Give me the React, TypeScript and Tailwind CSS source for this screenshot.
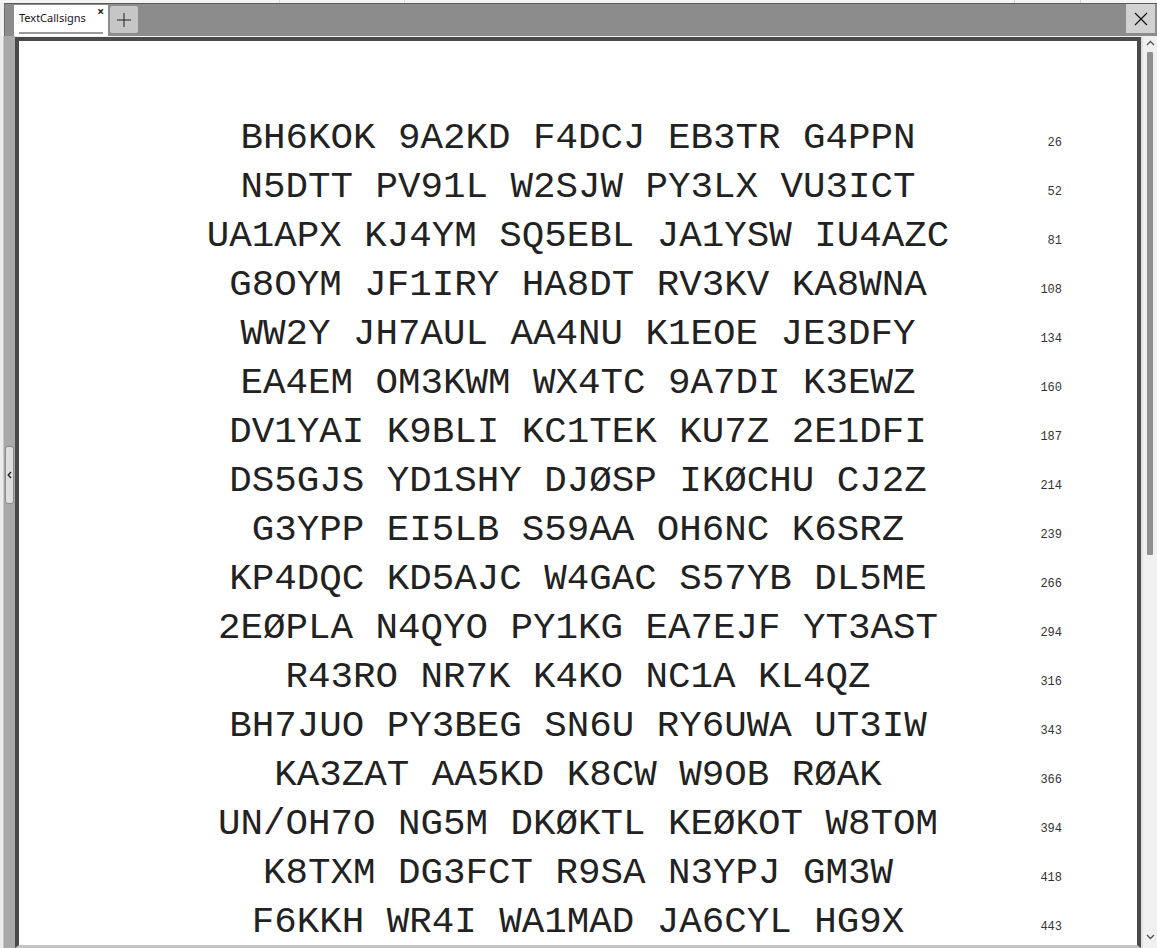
import React from "react";

const rows: [string, number][] = [
  ["BH6KOK 9A2KD F4DCJ EB3TR G4PPN", 26],
  ["N5DTT PV91L W2SJW PY3LX VU3ICT", 52],
  ["UA1APX KJ4YM SQ5EBL JA1YSW IU4AZC", 81],
  ["G8OYM JF1IRY HA8DT RV3KV KA8WNA", 108],
  ["WW2Y JH7AUL AA4NU K1EOE JE3DFY", 134],
  ["EA4EM OM3KWM WX4TC 9A7DI K3EWZ", 160],
  ["DV1YAI K9BLI KC1TEK KU7Z 2E1DFI", 187],
  ["DS5GJS YD1SHY DJØSP IKØCHU CJ2Z", 214],
  ["G3YPP EI5LB S59AA OH6NC K6SRZ", 239],
  ["KP4DQC KD5AJC W4GAC S57YB DL5ME", 266],
  ["2EØPLA N4QYO PY1KG EA7EJF YT3AST", 294],
  ["R43RO NR7K K4KO NC1A KL4QZ", 316],
  ["BH7JUO PY3BEG SN6U RY6UWA UT3IW", 343],
  ["KA3ZAT AA5KD K8CW W9OB RØAK", 366],
  ["UN/OH7O NG5M DKØKTL KEØKOT W8TOM", 394],
  ["K8TXM DG3FCT R9SA N3YPJ GM3W", 418],
  ["F6KKH WR4I WA1MAD JA6CYL HG9X", 443],
];

export default function App() {
  return (
    <div className="w-[1157px] h-[948px] overflow-hidden flex flex-col bg-[#f0f0f0] font-['Segoe_UI','Noto_Sans',sans-serif]">
      {/* top strip */}
      <div className="h-[3px] flex shrink-0 bg-[#f4f4f4]">
        <div className="w-[280px] border-r border-[#d8d8d8]" />
        <div className="w-[125px] border-r border-[#d8d8d8]" />
        <div className="w-[610px] border-r border-[#d0d0d0]" />
        <div className="w-[66px] border-r border-[#d0d0d0]" />
      </div>
      {/* tab bar */}
      <div className="h-[33px] shrink-0 flex items-start bg-[#8c8c8c] border-t border-[#5a5a5a] pl-[9px] pr-[2px] ml-[4px] border-l border-l-[#6a6a6a]">
        <div className="relative mt-[1px] w-[94px] h-[31px] bg-white">
          <span className="absolute left-[5px] top-[6px] text-[11px] leading-[14px] text-[#1c1222]">TextCallsigns</span>
          <span className="absolute right-[4px] top-[1px] text-[12px] leading-[12px] font-bold text-[#222]">×</span>
          <div className="absolute left-[5px] right-[5px] top-[27px] h-[2px] bg-[#9a9a9a]" />
        </div>
        <div className="ml-[2px] mt-[2px] w-[28px] h-[27px] rounded-[2px] bg-[#c6c6c6] flex items-center justify-center">
          <svg width="16" height="16" viewBox="0 0 16 16">
            <path d="M8 1v14M1 8h14" stroke="#222" strokeWidth="1" />
          </svg>
        </div>
        <div className="flex-1" />
        <div className="w-[29px] h-[29px] bg-[#d2d2d2] flex items-center justify-center">
          <svg width="14" height="14" viewBox="0 0 14 14">
            <path d="M1 1l12 12M13 1L1 13" stroke="#111" strokeWidth="1.2" />
          </svg>
        </div>
      </div>
      {/* body */}
      <div className="flex-1 flex min-h-0">
        {/* left strip */}
        <div className="w-[15px] shrink-0 flex">
          <div className="w-[4px] bg-[#ececec] border-r border-[#c8c8c8]" />
          <div className="flex-1 bg-[#a9a9a9] flex items-start">
            <div className="mt-[410px] ml-[1px] w-[9px] h-[58px] rounded-[3px] bg-[#dedede] border border-[#8a8a8a] flex items-center justify-center">
              <svg width="5" height="8" viewBox="0 0 5 8">
                <path d="M4 1L1.2 4L4 7" stroke="#222" strokeWidth="1.4" fill="none" />
              </svg>
            </div>
          </div>
        </div>
        {/* panel */}
        <div className="flex-1 min-w-0 mt-[1px] border-t-[4px] border-l-[4px] border-r-[4px] border-[#4a4a4a] border-b-[3px] border-b-[#c4c4c4] bg-white overflow-hidden">
          <div className="pt-[73px]">
            {rows.map(([t, n]) => (
              <div key={n} className="grid grid-cols-[1fr_auto_1fr] h-[49px]">
                <div />
                <div className="font-['Courier_New','Nimbus_Mono_PS','Nimbus_Mono_L','FreeMono','Liberation_Mono',monospace] text-[37.5px] leading-[49px] whitespace-pre text-[#222]">{t}</div>
                <div className="justify-self-end pr-[75px] pt-[23px] font-['Liberation_Mono',monospace] text-[12px] leading-[12px] text-[#333]">
                  {n}
                </div>
              </div>
            ))}
          </div>
        </div>
        {/* scrollbar */}
        <div className="w-[16px] shrink-0 bg-[#f0f0f0] border-l-[2px] border-[#e0e0e0] flex flex-col items-center">
          <svg className="mt-[4px]" width="9" height="6" viewBox="0 0 9 6">
            <path d="M1 5L4.5 1.5L8 5" stroke="#555" strokeWidth="1.4" fill="none" />
          </svg>
          <div className="mt-[6px] w-[6px] h-[503px] bg-[#8f8f8f] rounded-[1px]" />
          <div className="flex-1" />
          <svg className="mb-[8px]" width="9" height="6" viewBox="0 0 9 6">
            <path d="M1 1L4.5 4.5L8 1" stroke="#555" strokeWidth="1.4" fill="none" />
          </svg>
        </div>
      </div>
    </div>
  );
}
